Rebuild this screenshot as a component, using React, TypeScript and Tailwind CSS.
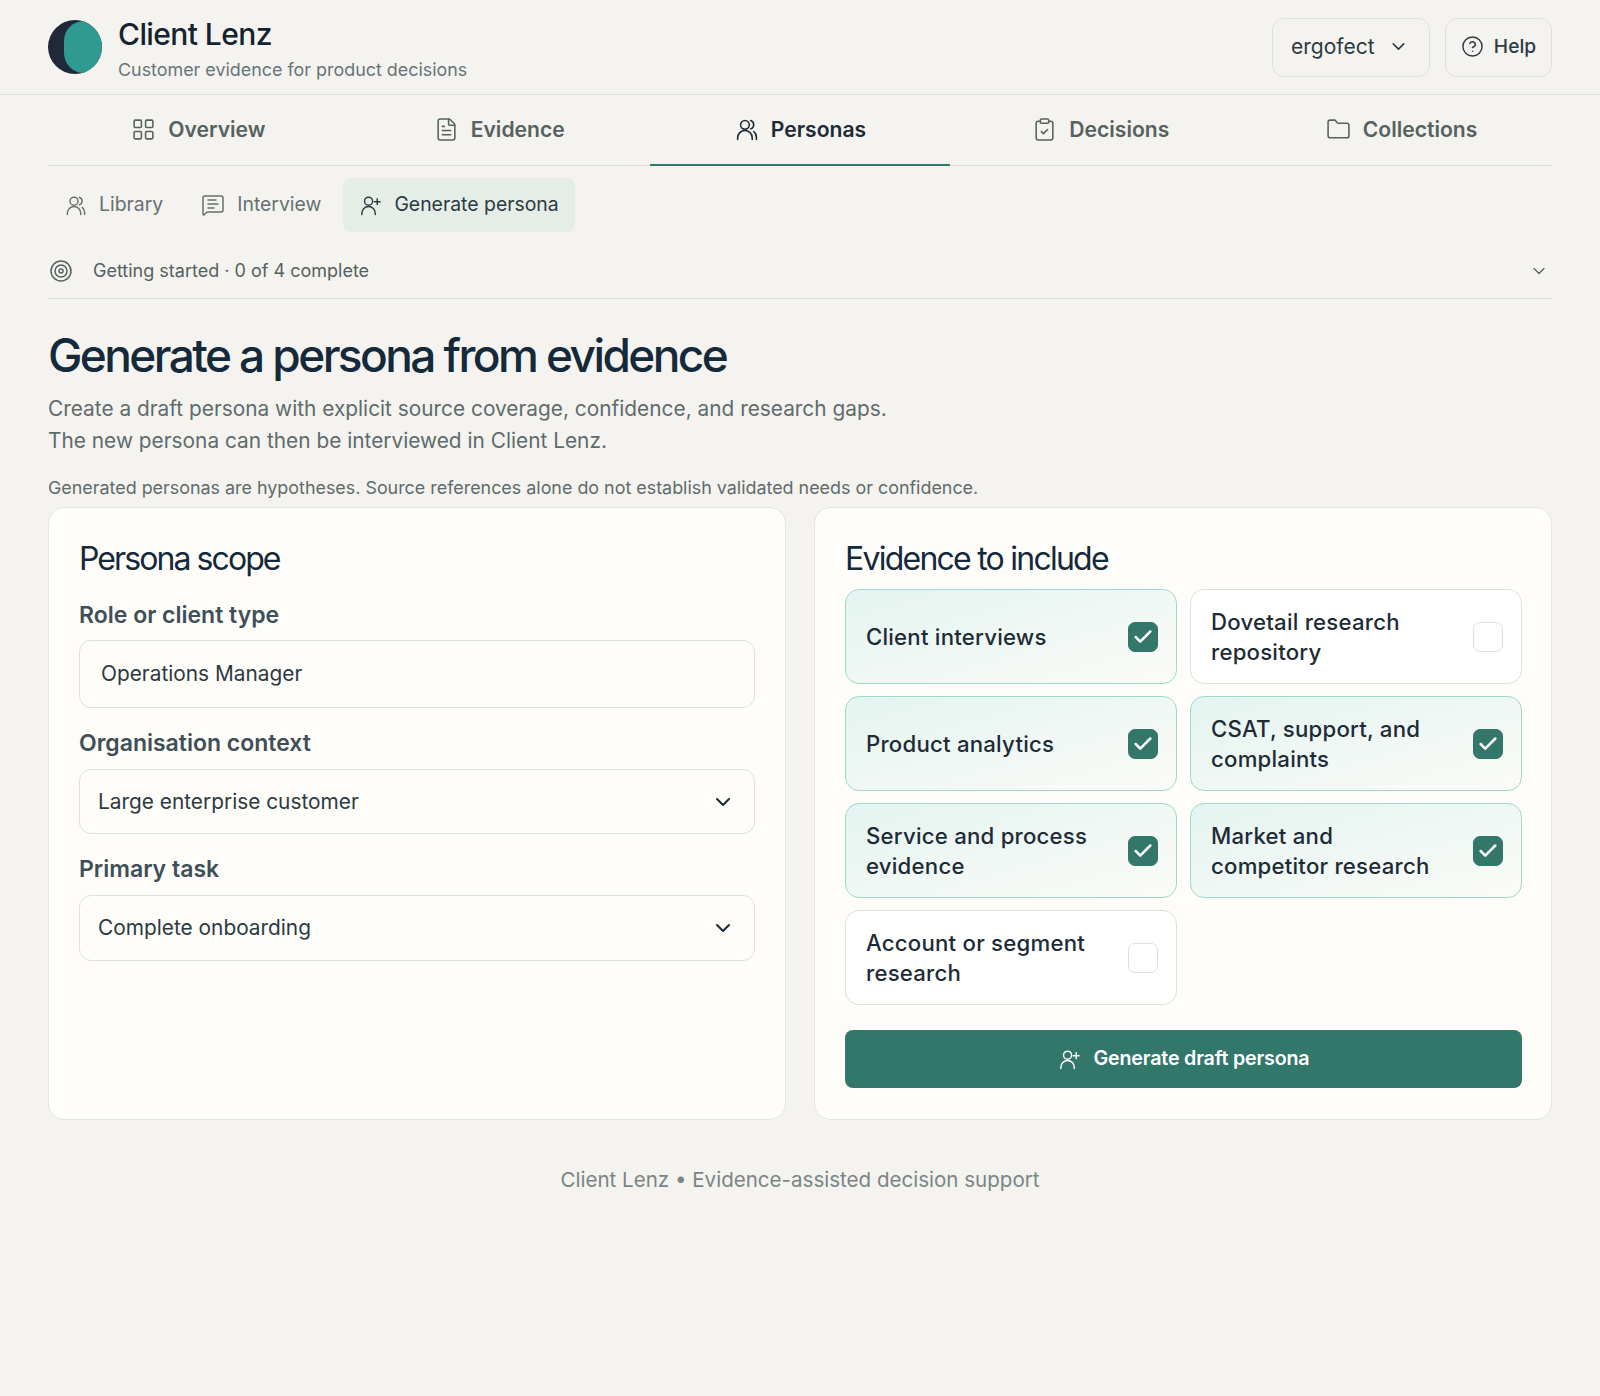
import {
  Check,
  ChevronDown,
  CircleHelp,
  ClipboardCheck,
  FileText,
  Folder,
  LayoutGrid,
  MessageSquareText,
  Target,
} from "lucide-react";

function PeopleIcon({ className }: { className?: string }) {
  return (
    <svg
      viewBox="0 0 24 24"
      fill="none"
      stroke="currentColor"
      strokeWidth={1.5}
      strokeLinecap="round"
      strokeLinejoin="round"
      className={className}
    >
      <circle cx="10.5" cy="7.5" r="4.2" />
      <path d="M3.5 21.5v-1.5a7 7 0 0 1 14 0v1.5" />
      <path d="M16 3.4a4.2 4.2 0 0 1 0 8" />
      <path d="M19 14a6.8 6.8 0 0 1 2.5 5.4v2.1" />
    </svg>
  );
}

function PersonPlusIcon({ className }: { className?: string }) {
  return (
    <svg
      viewBox="0 0 24 24"
      fill="none"
      stroke="currentColor"
      strokeWidth={1.5}
      strokeLinecap="round"
      strokeLinejoin="round"
      className={className}
    >
      <circle cx="10" cy="7.5" r="4.2" />
      <path d="M3 21.5v-1.5a7 7 0 0 1 14 0v1.5" />
      <path d="M19 5v6M16 8h6" />
    </svg>
  );
}

const tabs = [
  { label: "Overview", icon: LayoutGrid },
  { label: "Evidence", icon: FileText },
  { label: "Personas", icon: PeopleIcon, active: true },
  { label: "Decisions", icon: ClipboardCheck },
  { label: "Collections", icon: Folder },
];

const sources = [
  { label: "Client interviews", on: true },
  { label: "Dovetail research repository", on: false },
  { label: "Product analytics", on: true },
  { label: "CSAT, support, and complaints", on: true },
  { label: "Service and process evidence", on: true },
  { label: "Market and competitor research", on: true },
  { label: "Account or segment research", on: false },
];

function Select({ value, className }: { value: string; className: string }) {
  return (
    <div
      className={`flex items-center justify-between rounded-xl border border-[#dfe0dc] pl-[18px] pr-[19px] text-[20.85px] text-[#2c3a42] ${className}`}
    >
      <span>{value}</span>
      <ChevronDown className="h-[24px] w-[24px] text-[#1b2a33]" strokeWidth={2} />
    </div>
  );
}

function SourceOption({ label, on }: { label: string; on: boolean }) {
  return (
    <div
      className={`flex h-[95px] items-center justify-between rounded-[14px] border pl-[20px] pr-[18px] ${
        on
          ? "border-[#9fd9cd] bg-gradient-to-br from-[#e4f4f0] to-[#fbfbf8]"
          : "border-[#dfe0dc] bg-white"
      }`}
    >
      <span className="max-w-[236px] text-[22.2px] font-medium leading-[30px] tracking-[0.01em] text-[#1d2b36]">
        {label}
      </span>
      <span
        className={`flex h-[30px] w-[30px] items-center justify-center rounded-[7px] border ${
          on ? "border-[#33776b] bg-[#33776b]" : "border-[#dfe0dc] bg-white"
        }`}
      >
        {on && <Check className="h-[22px] w-[22px] text-white" strokeWidth={2.75} />}
      </span>
    </div>
  );
}

export default function App() {
  return (
    <div className="min-h-[1396px] bg-[#f4f3ef] font-['Inter',sans-serif] text-[#1b2a33]">
      <header className="flex h-[95px] items-center justify-between border-b border-[#deded9] px-[48px]">
        <div className="flex items-center gap-[16px]">
          <div className="relative h-[54px] w-[54px] overflow-hidden rounded-full bg-[#20283a]">
            <div className="absolute left-[16px] top-[1px] h-[52px] w-[40px] rounded-full bg-[#2f9a92]" />
          </div>
          <div className="pt-[4px]">
            <div className="text-[30px] font-medium leading-[36px] tracking-[-0.02em] text-[#14232e]">
              Client Lenz
            </div>
            <div className="mt-[5px] text-[17.9px] leading-[26px] text-[#68747a]">
              Customer evidence for product decisions
            </div>
          </div>
        </div>
        <div className="flex items-center gap-[15px]">
          <button className="flex h-[59px] w-[158px] items-center justify-between rounded-xl border border-[#e1e1dc] pb-[1px] pl-[18px] pr-[20px] text-[21px] text-[#2c3a42]">
            ergofect
            <ChevronDown className="h-[21px] w-[21px]" strokeWidth={1.75} />
          </button>
          <button className="flex h-[59px] w-[107px] items-center justify-center gap-[10px] rounded-xl border border-[#e1e1dc] pb-[1px] text-[19.2px] font-medium text-[#2c3a42]">
            <CircleHelp className="h-[23px] w-[23px]" strokeWidth={1.5} />
            Help
          </button>
        </div>
      </header>

      <main className="px-[48px]">
        <nav className="grid h-[71px] grid-cols-5 border-b border-[#deded9]">
          {tabs.map(({ label, icon: Icon, active }) => (
            <div
              key={label}
              className={`relative flex items-center justify-center gap-[12px] pb-[1px] text-[21.1px] font-semibold ${
                active ? "text-[#1d2b36]" : "text-[#56625f]"
              }`}
            >
              <Icon className="h-[25px] w-[25px]" strokeWidth={1.5} />
              {label}
              {active && (
                <span className="absolute inset-x-0 bottom-[-1px] h-[2px] bg-[#33776b]" />
              )}
            </div>
          ))}
        </nav>

        <div className="flex gap-[6px] pt-[12px] text-[19.4px]">
          <div className="flex h-[54px] items-center gap-[12px] px-[16px] text-[#66716f]">
            <PeopleIcon className="h-[23px] w-[23px]" />
            Library
          </div>
          <div className="flex h-[54px] items-center gap-[12px] px-[16px] text-[#66716f]">
            <MessageSquareText className="h-[24px] w-[24px]" strokeWidth={1.5} />
            Interview
          </div>
          <div className="flex h-[54px] items-center gap-[12px] rounded-lg bg-[#e5ede7] px-[16px] text-[#2c3a42]">
            <PersonPlusIcon className="h-[23px] w-[23px]" />
            Generate persona
          </div>
        </div>

        <div className="mt-[12px] flex h-[55px] items-center justify-between border-b border-[#deded9] pb-[1px] pl-[1px] pr-[3px] text-[18px] text-[#55615f]">
          <div className="flex items-center gap-[20px]">
            <Target className="h-[24px] w-[24px]" strokeWidth={1.5} />
            Getting started · 0 of 4 complete
          </div>
          <ChevronDown className="h-[20px] w-[20px]" strokeWidth={1.5} />
        </div>

        <h1 className="mt-[24px] text-[46px] font-medium leading-[64px] tracking-[-0.056em] text-[#14293a]">
          Generate a persona from evidence
        </h1>
        <p className="mt-[6px] text-[20.85px] leading-[32px] text-[#5f6b6c]">
          Create a draft persona with explicit source coverage, confidence, and research gaps.
          <br />
          The new persona can then be interviewed in Client Lenz.
        </p>
        <p className="mt-[18px] text-[17.9px] leading-[26px] text-[#5f6b6c]">
          Generated personas are hypotheses. Source references alone do not establish validated needs or confidence.
        </p>

        <div className="mt-[6px] grid h-[613px] grid-cols-2 gap-[28px]">
          <section className="rounded-2xl border border-[#e6e6e1] bg-[#fefdfa] px-[30px] pt-[31px]">
            <h2 className="text-[32px] font-normal leading-[40px] tracking-[-0.06em] text-[#14293a]">
              Persona scope
            </h2>
            <label className="mt-[21px] block text-[23px] font-semibold leading-[30px] text-[#3f4f58]">
              Role or client type
            </label>
            <div className="mt-[10px] flex h-[68px] items-center rounded-xl border border-[#dfe0dc] px-[21px] text-[20.85px] text-[#2c3a42]">
              Operations Manager
            </div>
            <label className="mt-[20px] block text-[23px] font-semibold leading-[30px] text-[#3f4f58]">
              Organisation context
            </label>
            <div className="mt-[11px]">
              <Select value="Large enterprise customer" className="h-[65px]" />
            </div>
            <label className="mt-[20px] block text-[23px] font-semibold leading-[30px] text-[#3f4f58]">
              Primary task
            </label>
            <div className="mt-[11px]">
              <Select value="Complete onboarding" className="h-[66px]" />
            </div>
          </section>

          <section className="rounded-2xl border border-[#e6e6e1] bg-[#fefdfa] pl-[30px] pr-[29px] pt-[31px]">
            <h2 className="text-[32px] font-normal leading-[40px] tracking-[-0.055em] text-[#14293a]">
              Evidence to include
            </h2>
            <div className="mt-[10px] grid grid-cols-2 gap-x-[13px] gap-y-[12px]">
              {sources.map((s) => (
                <SourceOption key={s.label} label={s.label} on={s.on} />
              ))}
            </div>
            <button className="mt-[25px] flex h-[58px] w-full items-center justify-center gap-[13px] rounded-lg bg-[#33776b] text-[19.7px] font-semibold tracking-[-0.01em] text-white">
              <PersonPlusIcon className="h-[23px] w-[23px]" />
              Generate draft persona
            </button>
          </section>
        </div>

        <footer className="mt-[45px] text-center text-[20.55px] text-[#7a8585]">
          Client Lenz • Evidence-assisted decision support
        </footer>
      </main>
    </div>
  );
}
